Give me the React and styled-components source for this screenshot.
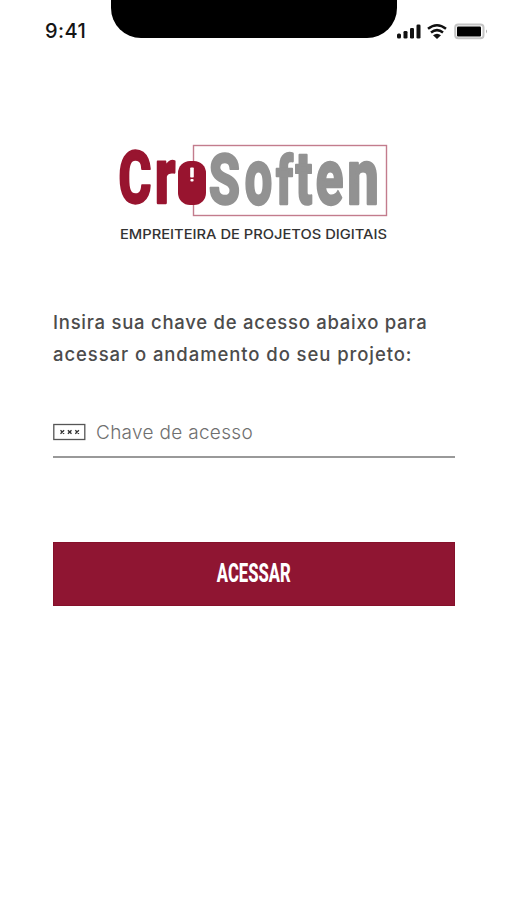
import React from "react";
import styled, { createGlobalStyle } from "styled-components";

const GlobalStyle = createGlobalStyle`
  * { box-sizing: border-box; }
  body { margin: 0; background: #fff; }
`;

const Screen = styled.main`
  width: 506px;
  height: 900px;
  overflow: hidden;
  background: #fff;
  font-family: Inter, "Liberation Sans", sans-serif;
`;

const StatusBar = styled.header`
  display: grid;
  grid-template-columns: 111px 286px 1fr;
  height: 48px;
`;

const Clock = styled.time`
  padding: 19px 0 0 45px;
  font-size: 20px;
  line-height: 24px;
  font-weight: 500;
  color: #151515;
  letter-spacing: 0.4px;
`;

const Notch = styled.div`
  height: 38px;
  background: #000;
  border-radius: 0 0 30px 30px;
`;

const StatusIcons = styled.svg`
  display: block;
  width: 109px;
  height: 48px;
`;

const Logo = styled.svg`
  display: block;
  width: 290px;
  height: 140px;
  margin: 62px 0 0 110px;
`;

const Glyph = styled.text`
  font-family: Roboto, sans-serif;
  font-weight: 800;
  font-size: 80px;
  stroke-width: 2px;
  stroke-linejoin: round;
  vector-effect: non-scaling-stroke;
`;

const Tagline = styled.text`
  font-family: Inter, sans-serif;
  font-weight: 500;
  font-size: 13px;
  fill: #333;
`;

const Form = styled.form`
  display: flex;
  flex-direction: column;
  width: 402px;
  margin: 56px 0 0 53px;
`;

const Line = styled.span`
  display: block;
  white-space: nowrap;
  letter-spacing: ${(p) => p.$spacing}px;
`;

const Prompt = styled.p`
  margin: 0;
  font-size: 18.5px;
  line-height: 32px;
  font-weight: 500;
  color: #4c4c4c;
`;

const Field = styled.label`
  display: flex;
  align-items: center;
  gap: 10px;
  height: 50px;
  margin-top: 38px;
  border-bottom: 2px solid #999;
`;

const KeyIcon = styled.svg`
  flex: none;
  width: 33px;
  height: 18px;
`;

const Input = styled.input`
  flex: 1;
  min-width: 0;
  padding: 2px 0 0;
  border: 0;
  outline: 0;
  background: transparent;
  font: 300 19px/24px Inter, sans-serif;
  letter-spacing: 0.3px;
  &::placeholder { color: #6f6f6f; opacity: 1; }
`;

const Submit = styled.button`
  display: grid;
  place-items: center;
  height: 64px;
  margin-top: 84px;
  padding: 0 0 2px 0;
  border: 1px solid #85102a;
  background: #8f1532;
  color: #fff;
`;

const SubmitLabel = styled.span`
  font: 800 26px/30px Roboto, sans-serif;
  transform: scaleX(0.64);
`;

const red = "#98142f";
const gray = "#929292";

/* Each letter: character, left edge, width, height, colour, baseline. */
const glyphs = [
  ["C", 120.5, 29.5, 51, red, 203],
  ["r", 157.5, 18, 41.5, red, 203],
  ["S", 210, 29, 50, gray, 204],
  ["o", 246, 25, 41.5, gray, 204],
  ["f", 276.5, 16.5, 50.5, gray, 204],
  ["t", 295.5, 16, 49, gray, 204],
  ["e", 317, 25.5, 41.5, gray, 204],
  ["n", 350, 26, 41.5, gray, 204],
];

/* Left bearing, width and height of the letters at the 80px font size. */
const metrics = {
  C: [3.2, 47, 57],
  r: [3.8, 26, 43],
  S: [2, 46, 57],
  o: [2, 41, 43],
  f: [1, 28, 60],
  t: [0, 26, 53],
  e: [2, 40, 43],
  n: [4, 37, 43],
};

export default function App() {
  return (
    <>
      <GlobalStyle />
      <Screen>
        <StatusBar>
          <Clock>9:41</Clock>
          <Notch />
          <StatusIcons viewBox="397 0 109 48">
            <g fill="#111">
              <rect x="397" y="33.5" width="4" height="5" rx="1.5" />
              <rect x="403.5" y="31" width="4" height="7.5" rx="1.3" />
              <rect x="410" y="28" width="4" height="10.5" rx="1.3" />
              <rect x="416.5" y="24.5" width="4" height="14" rx="1.3" />
              <path d="M433 35.2q4-3 8 0l-4 3.8Z" />
            </g>
            <path d="M428 28.8q9-7.2 18 0M431 32.5q6-4.8 12 0" fill="none" stroke="#111" strokeWidth="2.5" />
            <rect x="455.2" y="24.5" width="28.3" height="13.8" rx="3" fill="#fff" stroke="#c4c4c4" strokeWidth="2" />
            <rect x="457" y="26.5" width="24" height="10" rx="1" fill="#000" />
            <path d="M486 29.5q2 1.5 0 4Z" fill="#aaa" />
          </StatusIcons>
        </StatusBar>
        <Logo viewBox="110 110 290 140" role="img" aria-label="CroSoften">
          <rect x="193.5" y="145.5" width="193" height="70" fill="none" stroke="#c37c8d" strokeWidth="1.4" />
          {glyphs.map(([ch, x, w, h, color, base]) => {
            const [lsb, gw, gh] = metrics[ch];
            return (
              <Glyph
                key={ch}
                fill={color}
                stroke={color}
                transform={`translate(${x} ${base}) scale(${w / gw} ${h / gh}) translate(${-lsb} 0)`}
              >
                {ch}
              </Glyph>
            );
          })}
          <rect x="178" y="161" width="28" height="44" rx="12" fill={red} />
          <rect x="190.2" y="167.5" width="3.6" height="10" rx="0.8" fill="#fff" />
          <rect x="190.4" y="179" width="3.2" height="2.4" rx="1" fill="#fff" />
          <Tagline x="120" y="238.5" textLength="267" lengthAdjust="spacingAndGlyphs">
            EMPREITEIRA DE PROJETOS DIGITAIS
          </Tagline>
        </Logo>
        <Form onSubmit={(e) => e.preventDefault()}>
          <Prompt>
            <Line $spacing={0.74}>Insira sua chave de acesso abaixo para</Line>
            <Line $spacing={0.92}>acessar o andamento do seu projeto:</Line>
          </Prompt>
          <Field>
            <KeyIcon viewBox="0 0 33 18">
              <rect x="0.8" y="1.5" width="31" height="15" fill="none" stroke="#555" strokeWidth="1.3" />
              <path d="m7.5 7.2 3.6 3.6m0-3.6-3.6 3.6m7.4-3.6 3.6 3.6m0-3.6-3.6 3.6m7.4-3.6 3.6 3.6m0-3.6-3.6 3.6" stroke="#333" strokeWidth="1.3" />
            </KeyIcon>
            <Input placeholder="Chave de acesso" aria-label="Chave de acesso" />
          </Field>
          <Submit><SubmitLabel>ACESSAR</SubmitLabel></Submit>
        </Form>
      </Screen>
    </>
  );
}
